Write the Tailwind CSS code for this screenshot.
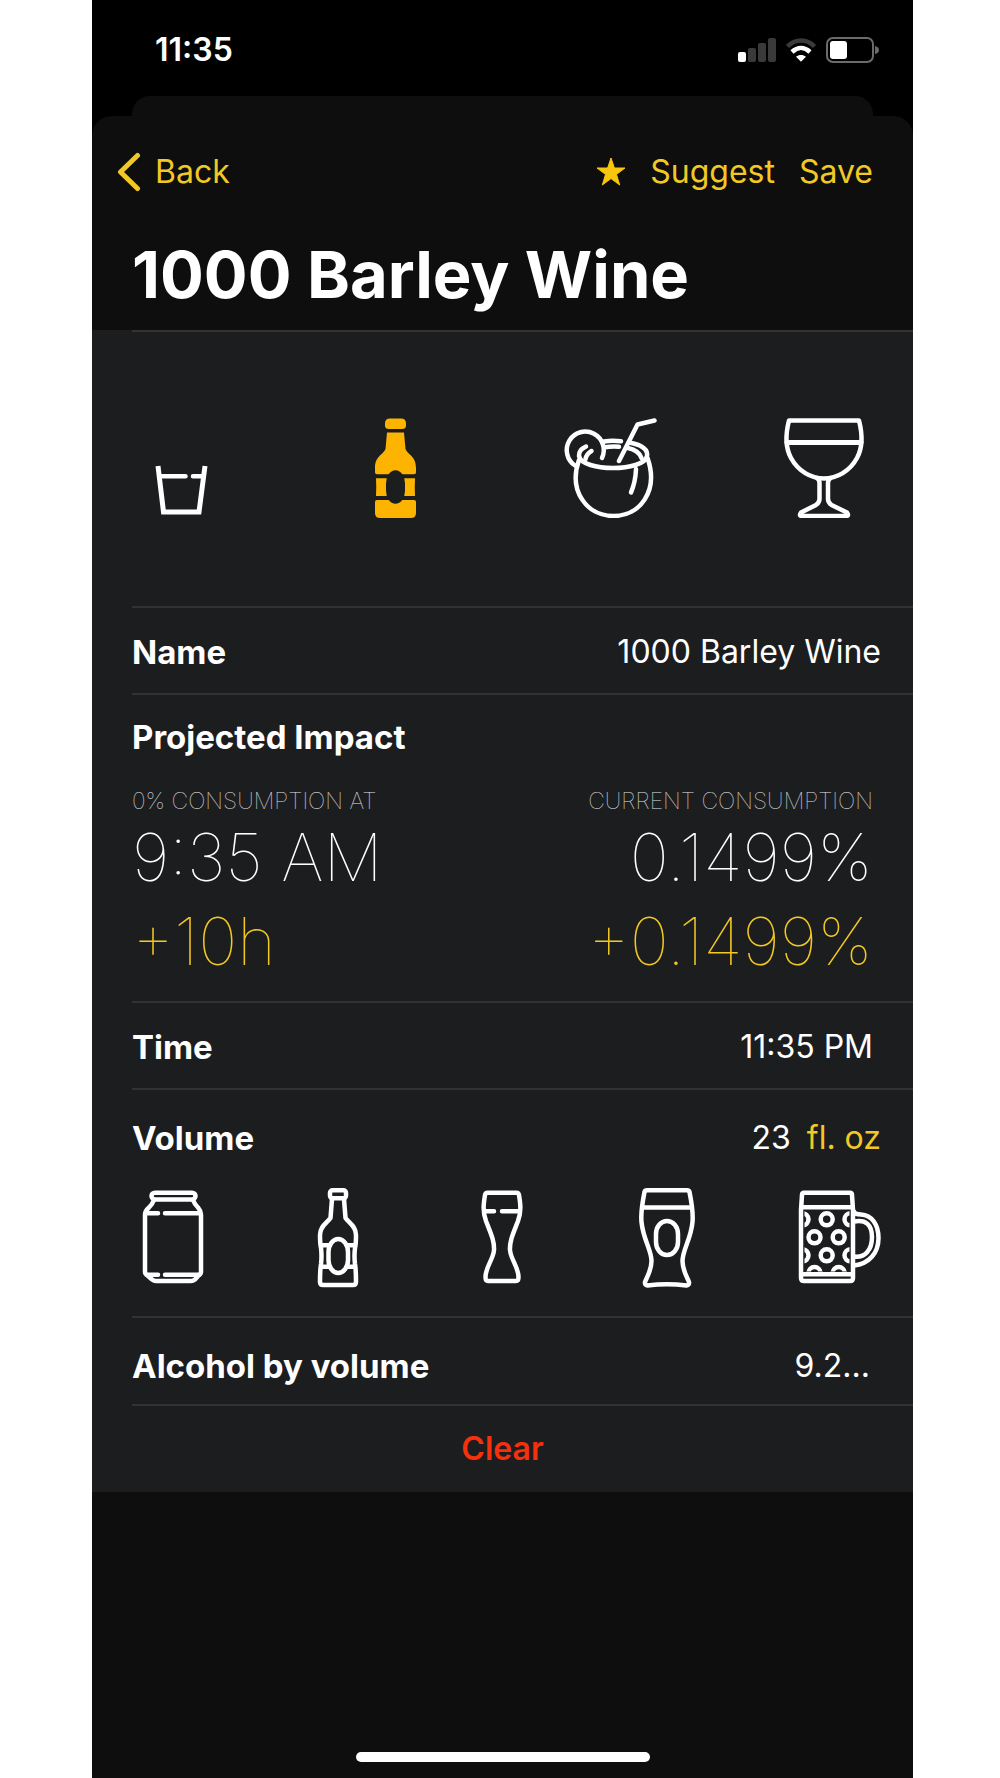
<!DOCTYPE html>
<html lang="en">

<head>
  <meta charset="UTF-8" />
  <meta name="viewport" content="width=device-width, initial-scale=1.0" />
  <title>1000 Barley Wine</title>
  <script src="https://cdn.jsdelivr.net/npm/@tailwindcss/browser@4"></script>
</head>
<body class="bg-white pl-[92px] pr-[87px] font-['Inter','Liberation_Sans',sans-serif] text-[32px] leading-10 text-white">
  <div class="flex min-h-screen flex-col bg-black">

    <!-- status bar -->
    <div class="flex items-center justify-between pt-[30px] pb-[26px] pl-[63px] pr-[34px]">
      <span class="font-semibold">11:35</span>
      <div class="flex items-center gap-[9px]">
        <svg class="h-6 w-[38px]" viewBox="0 0 38 24">
          <rect x="0" y="14" width="8" height="10" rx="2" fill="#fff" />
          <rect x="10" y="10" width="8" height="14" rx="2" fill="#3a3a3a" />
          <rect x="20" y="5" width="8" height="19" rx="2" fill="#3a3a3a" />
          <rect x="30" y="0" width="8" height="24" rx="2" fill="#3a3a3a" />
        </svg>
        <svg class="h-6 w-8" viewBox="0 0 32 24" fill="none" stroke-width="4.500">
          <path d="M2.500 8.500C10 .500 22 .500 29.500 8.500" stroke="#3a3a3a" />
          <path d="M7 14C12.500 8.800 19.500 8.800 25 14" stroke="#fff" />
          <path d="M11 18.800C14 16.400 18 16.400 21 18.800L16 23.800Z" fill="#fff" />
        </svg>
        <svg class="h-[26px] w-[53px]" viewBox="0 0 53 26">
          <rect x="1" y="1" width="46" height="24" rx="6" fill="none" stroke="#6b6b6b" stroke-width="2" />
          <rect x="4" y="4" width="17" height="18" rx="3" fill="#fff" />
          <path d="M49 9Q53 10 53 13T49 17Z" fill="#6b6b6b" />
        </svg>
      </div>
    </div>

    <!-- edge of the sheet behind -->
    <div class="mx-10 h-5 rounded-t-[18px] bg-[#0e0e0e]"></div>

    <div class="flex flex-1 flex-col rounded-t-[20px] bg-[#0e0e0e]">
      <header class="pt-9">
        <nav class="flex items-center justify-between pl-[25px] pr-10 text-[#f2c824]">
          <button class="flex items-center gap-[14px]">
            <svg class="h-10 w-6" viewBox="0 0 24 40" fill="none" stroke="currentColor" stroke-width="5" stroke-linecap="round" stroke-linejoin="round"><path d="M20.500 3.500L3.500 20L20.500 36.500" /></svg>
            Back
          </button>
          <div class="flex items-center gap-6">
            <button aria-label="Favorite"><svg class="block h-[30px] w-[30px]" viewBox="0 0 30 30" fill="#f8c60c" stroke="#f8c60c" stroke-width="1" stroke-linejoin="round"><path d="M15 1L18.400 11H29L20.500 17.400L23.700 28L15 21.600L6.300 28L9.500 17.400L1 11H11.600Z" /></svg></button>
            <button>Suggest</button>
            <button>Save</button>
          </div>
        </nav>
        <h1 class="pt-[41px] pb-[13px] pl-10 text-[65px] leading-[84px] font-bold">1000 Barley Wine</h1>
      </header>

      <main class="bg-[#1c1d1f]">
        <section class="ml-10 flex justify-between border-t-2 border-[#303234] pt-[86px] pb-[88px] pr-[39px]">
          <button aria-label="Shot">
            <svg class="h-[100px] w-[100px]" viewBox="0 0 100 100" fill="none" stroke="#fff" stroke-width="5">
              <path d="M26 48L31.500 94H67L73 48" />
              <path d="M30 58.300H53.500M61 58.300H70" stroke-width="4.500" stroke-linecap="round" />
            </svg>
          </button>
          <button aria-label="Beer" aria-pressed="true">
            <svg class="h-[100px] w-[100px]" viewBox="0 0 100 100" fill="#fcb400">
              <path d="M44 .500H55Q60 .500 60 5.500V7.500Q60 11 56 11H43Q39 11 39 7.500V5.500Q39 .500 44 .500Z" />
              <path d="M41 14.500H58L59.500 31C62 37 70 38 70 50V54.500Q70 56.300 68 56.300H31Q29 56.300 29 54.500V50C29 38 37 37 39.500 31Z" />
              <path d="M30 60.300H69Q68.500 69 69 78H30Q30.500 69 30 60.300Z" />
              <path d="M31 82H68Q70 82 70 84V95Q70 100 65 100H34Q29 100 29 95V84Q29 82 31 82Z" />
              <rect x="40" y="52.300" width="19" height="33.400" rx="9.500" ry="13" fill="#1c1d1f" />
            </svg>
          </button>
          <button aria-label="Cocktail">
            <svg class="h-[100px] w-[100px]" viewBox="0 0 100 100" fill="none" stroke="#fff" stroke-width="4.500" stroke-linecap="round" stroke-linejoin="round">
              <path d="M19 42C8 73 27 98 53.500 98S99 73 87.500 40" />
              <path d="M26 28.500C21 31 19 33 19 38C22 54 84 54 87 38C88 32 82 27 69.500 24.500M44 23.500Q52 22.200 61 23.300" />
              <path d="M31.500 33Q26.500 36 25.500 41M45 29.300Q52 28.200 59 28.800M68 30Q79 32.500 81.500 40" />
              <path d="M15 47.500A18.500 18.500 0 1 1 42 40" />
              <path d="M59 43L77.500 6.500L94.500 2.500" />
              <path d="M76 51Q75.500 64 71 74.500" />
            </svg>
          </button>
          <button aria-label="Wine">
            <svg class="h-[100px] w-[100px]" viewBox="0 0 100 100" fill="none" stroke="#fff" stroke-width="4.500" stroke-linecap="round" stroke-linejoin="round">
              <path d="M15 2.500H85C89 18 88.500 30 83 40C76 53 63 60.500 50 60.500S24 53 17 40C11.500 30 11 18 15 2.500Z" />
              <path d="M13 24.500H87" stroke-width="5" />
              <path d="M43 60Q45.500 61.500 45.500 65V81Q45.500 84.500 42 87L27 94.500Q24.500 98 28 98H72Q75.500 98 73 94.500L57.500 87Q54 84.500 54 81V65Q54 61.500 56.500 60" />
            </svg>
          </button>
        </section>

        <div class="ml-10 flex h-[87px] items-center justify-between border-t-2 border-[#303234] pt-[2px] pr-8">
          <label for="name" class="text-[33px] font-bold">Name</label>
          <input id="name" type="text" value="1000 Barley Wine" class="min-w-0 flex-1 bg-transparent text-right outline-none" />
        </div>

        <section class="ml-10 border-t-2 border-[#303234] pt-[22px] pb-[18px] pr-10">
          <h2 class="mb-[30px] text-[33px] font-bold">Projected Impact</h2>
          <div class="flex justify-between">
            <div>
              <p class="text-[23px] leading-7 font-thin text-[#e4e4e6]">0% CONSUMPTION AT</p>
              <p class="text-[66px] leading-[84px] font-thin">9:35 AM</p>
              <p class="text-[66px] leading-[84px] font-thin text-[#f2c824]">+10h</p>
            </div>
            <div class="text-right">
              <p class="text-[23px] leading-7 font-thin text-[#e4e4e6]">CURRENT CONSUMPTION</p>
              <p class="text-[66px] leading-[84px] font-thin">0.1499%</p>
              <p class="text-[66px] leading-[84px] font-thin text-[#f2c824]">+0.1499%</p>
            </div>
          </div>
        </section>

        <div class="ml-10 flex h-[87px] items-center justify-between border-t-2 border-[#303234] pt-[2px] pr-10">
          <label for="time" class="text-[33px] font-bold">Time</label>
          <input id="time" type="text" value="11:35 PM" class="min-w-0 flex-1 bg-transparent text-right outline-none" />
        </div>

        <section class="ml-10 border-t-2 border-[#303234] pt-7 pb-7 pr-8">
          <div class="mb-[30px] flex items-center">
            <label for="volume" class="text-[33px] font-bold">Volume</label>
            <input id="volume" type="text" value="23" class="mr-4 min-w-0 flex-1 bg-transparent text-right outline-none" />
            <button class="text-[#f2c824]">fl. oz</button>
          </div>
          <div class="-ml-[9px] flex justify-between">
            <button aria-label="Can">
              <svg class="h-[100px] w-[100px]" viewBox="0 0 100 100" fill="none" stroke="#fff" stroke-width="4.500" stroke-linecap="round" stroke-linejoin="round">
                <rect x="28.500" y="4.700" width="44" height="6.800" rx="3.400" />
                <path d="M31 12Q29.500 16 26 19.500Q22 23 22 26.500V84Q22 86 24.500 87.500L29 91.500Q31 93 33 93H68Q70 93 72 91.500L75.500 87.500Q78 86 78 84V26.500Q78 23 75 19.500Q71.500 16 70 12" />
                <path d="M24 25.300H35M42 25.300H76M24 86.700H35M42 86.700H76" />
              </svg>
            </button>
            <button aria-label="Bottle">
              <svg class="h-[100px] w-[100px]" viewBox="0 0 100 100" fill="none" stroke="#fff" stroke-width="4.500" stroke-linecap="round" stroke-linejoin="round">
                <rect x="42" y="2.300" width="16" height="8" rx="2.500" />
                <path d="M44 11L42.500 30C39 35 32 38 32 47Q32 56 33 60Q34 68 33 76Q32 82 32 94Q32 97 35 97H65Q68 97 68 94Q68 82 67 76Q66 68 67 60Q68 56 68 47C68 38 61 35 57.500 30L56 11" />
                <rect x="40.500" y="51" width="19.500" height="34" rx="9.750" ry="13" />
                <path d="M34 57.200H41M59 57.200H66M34 78.700H41M59 78.700H66" />
              </svg>
            </button>
            <button aria-label="Half pint">
              <svg class="h-[100px] w-[100px]" viewBox="0 0 100 100" fill="none" stroke="#fff" stroke-width="4.500" stroke-linecap="round" stroke-linejoin="round">
                <path d="M35.500 4.700H64.500Q66.500 4.700 67 7C68.500 16 69.500 23 66 33C61 46 57.500 53 58 62C58.500 71 66.500 79 66.500 89Q66.500 93 64 93H36Q33.500 93 33.500 89C33.500 79 41.500 71 42 62C42.500 53 39 46 34 33C30.500 23 31.500 16 33 7Q33.500 4.700 35.500 4.700Z" />
                <path d="M33 23.200H42M50 23.200H67" />
              </svg>
            </button>
            <button aria-label="Pint">
              <svg class="h-[100px] w-[100px]" viewBox="0 0 100 100" fill="none" stroke="#fff" stroke-width="4.500" stroke-linecap="round" stroke-linejoin="round">
                <path d="M30 2.300H70Q72 2.300 72.500 4C74.500 14 76.500 24 75.500 34C74 51 65.500 62 65.500 73C65.500 82 69.500 88 72 94Q72.500 97 69.500 97.500Q50 95 30.500 97.500Q27.500 97 28 94C30.500 88 34.500 82 34.500 73C34.500 62 26 51 24.500 34C23.500 24 25.500 14 27.500 4Q28 2.300 30 2.300Z" />
                <path d="M26 19.500H74" />
                <rect x="39" y="33" width="22" height="34" rx="11" ry="13" />
              </svg>
            </button>
            <button aria-label="Mug">
              <svg class="h-[100px] w-[100px]" viewBox="0 0 100 100" fill="none" stroke="#fff" stroke-width="4.500" stroke-linecap="round" stroke-linejoin="round">
                <clipPath id="glass"><rect x="23.500" y="22" width="45" height="61.500" /></clipPath>
                <path d="M23 4.700H69Q71 4.700 71 7L72 22V90Q72 93 69 93H23Q20 93 20 90V22L21 7Q21 4.700 23 4.700Z" />
                <path d="M21 19.200H71M21 86.300H71" />
                <g clip-path="url(#glass)">
                  <circle cx="21.500" cy="31.300" r="6" />
                  <circle cx="45.700" cy="31.300" r="6" />
                  <circle cx="69.500" cy="31.300" r="6" />
                  <circle cx="33.500" cy="49.300" r="6" />
                  <circle cx="57.700" cy="49.300" r="6" />
                  <circle cx="21.500" cy="67.300" r="6" />
                  <circle cx="45.700" cy="67.300" r="6" />
                  <circle cx="69.500" cy="67.300" r="6" />
                  <circle cx="33.500" cy="85" r="6" />
                  <circle cx="57.700" cy="85" r="6" />
                </g>
                <path d="M73 23.500Q74 26.500 80 26.500C91 27 97.500 37 97.500 50C97.500 65 88 76 73 77.500" />
                <path d="M73 33.500C85 31 91 37 91 49C91 62 84 70 73 68.500" />
              </svg>
            </button>
          </div>
        </section>

        <div class="ml-10 flex h-[88px] items-center justify-between border-t-2 border-[#303234] pt-[10px] pr-[43px]">
          <label for="abv" class="text-[33px] font-bold">Alcohol by volume</label>
          <input id="abv" type="text" value="9.2..." class="min-w-0 flex-1 bg-transparent text-right outline-none" />
        </div>

        <div class="ml-10 border-t-2 border-[#303234]">
          <button class="-ml-10 block h-[86px] w-[calc(100%+40px)] font-semibold text-[#f6300c]">Clear</button>
        </div>
      </main>

      <!-- home indicator -->
      <div class="mx-auto mt-auto mb-4 h-[10px] w-[294px] rounded-full bg-white"></div>
    </div>
  </div>
</body>
</html>
